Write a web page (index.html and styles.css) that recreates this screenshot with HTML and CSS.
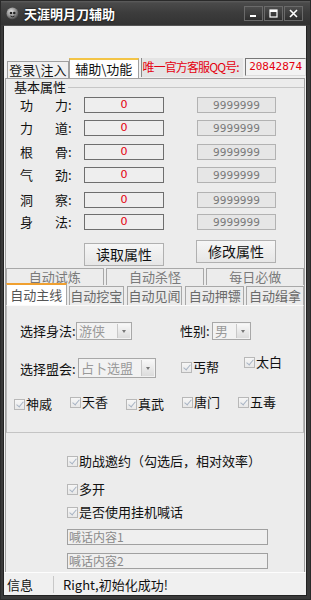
FILE: index.html
```html
<!DOCTYPE html>
<html lang="zh">
<head>
<meta charset="utf-8">
<title>天涯明月刀辅助</title>
<link rel="stylesheet" href="styles.css">
</head>
<body>
<div class="window">
  <div class="titlebar">
    <svg class="app-icon" width="13" height="13" viewBox="0 0 13 13">
      <defs><radialGradient id="g" cx="40%" cy="35%" r="70%"><stop offset="0" stop-color="#e8e8e8"/><stop offset="0.6" stop-color="#8a8a8a"/><stop offset="1" stop-color="#3a3a3a"/></radialGradient></defs>
      <circle cx="6.5" cy="6.5" r="6" fill="url(#g)"/>
      <circle cx="5" cy="6" r="1.3" fill="#222"/><circle cx="8.3" cy="6" r="1.3" fill="#222"/>
      <path d="M4.5 9 Q6.5 10.5 8.5 9" stroke="#222" stroke-width="1" fill="none"/>
    </svg>
    <span class="title">天涯明月刀辅助</span>
    <div class="winbtns">
      <span class="wbtn"><svg width="9" height="9" viewBox="0 0 9 9"><rect x="1" y="6" width="6" height="2" fill="#fff"/></svg></span>
      <span class="wbtn"><svg width="9" height="9" viewBox="0 0 9 9"><rect x="1" y="1" width="7" height="7" fill="none" stroke="#fff" stroke-width="1.2"/><rect x="1" y="1" width="7" height="2" fill="#fff"/></svg></span>
      <span class="wbtn"><svg width="9" height="9" viewBox="0 0 9 9"><path d="M1 1 L8 8 M8 1 L1 8" stroke="#fff" stroke-width="1.6"/></svg></span>
    </div>
  </div>
  <div class="client">
    <div class="tabbar">
      <div class="tab">登录\注入</div>
      <div class="tab tab-active">辅助\功能</div>
      <div class="qq-label">唯一官方客服QQ号:</div>
      <div class="qq-box">20842874</div>
    </div>
    <div class="mainpanel">
      <div class="group-head"><span>基本属性</span><span class="group-line"></span></div>
      <div class="attrs">
        <span class="l1">功</span><span class="l2">力:</span><span class="val">0</span><span></span><span class="max">9999999</span>
        <span class="l1">力</span><span class="l2">道:</span><span class="val">0</span><span></span><span class="max">9999999</span>
        <span class="l1">根</span><span class="l2">骨:</span><span class="val">0</span><span></span><span class="max">9999999</span>
        <span class="l1">气</span><span class="l2">劲:</span><span class="val">0</span><span></span><span class="max">9999999</span>
        <span class="l1">洞</span><span class="l2">察:</span><span class="val">0</span><span></span><span class="max">9999999</span>
        <span class="l1">身</span><span class="l2">法:</span><span class="val">0</span><span></span><span class="max">9999999</span>
      </div>
      <div class="btnrow">
        <div class="btn btn-read">读取属性</div>
        <div class="btn btn-edit">修改属性</div>
      </div>
      <div class="itabs-row1">
        <div class="itab w99">自动试炼</div>
        <div class="itab w100">自动杀怪</div>
        <div class="itab w99">每日必做</div>
      </div>
      <div class="itabs-row2">
        <div class="itab2 itab2-active w62">自动主线</div>
        <div class="itab2 w56">自动挖宝</div>
        <div class="itab2 w57">自动见闻</div>
        <div class="itab2 w60">自动押镖</div>
        <div class="itab2 w59">自动缉拿</div>
      </div>
      <div class="innerpanel">
        <div class="irow irow1">
          <span class="lbl lbl-school">选择身法:</span>
          <div class="combo combo-school"><span class="ctext">游侠</span><span class="carrow"></span></div>
          <span class="lbl lbl-sex">性别:</span>
          <div class="combo combo-sex"><span class="ctext">男</span><span class="carrow"></span></div>
        </div>
        <div class="irow irow2">
          <span class="lbl lbl-school">选择盟会:</span>
          <div class="combo combo-guild"><span class="ctext">占卜选盟</span><span class="carrow"></span></div>
          <label class="chk chk-gai"><span class="box"></span>丐帮</label>
          <label class="chk chk-tai"><span class="box"></span>太白</label>
        </div>
        <div class="irow irow3">
          <label class="chk c56"><span class="box"></span>神威</label>
          <label class="chk c56 up2"><span class="box"></span>天香</label>
          <label class="chk c56"><span class="box"></span>真武</label>
          <label class="chk c56 up2"><span class="box"></span>唐门</label>
          <label class="chk c56 up2"><span class="box"></span>五毒</label>
        </div>
      </div>
      <div class="lower">
        <label class="chk lrow lrow1"><span class="box"></span>助战邀约（勾选后，相对效率）</label>
        <label class="chk lrow lrow2"><span class="box"></span>多开</label>
        <label class="chk lrow lrow3"><span class="box"></span>是否使用挂机喊话</label>
        <div class="tbox tbox1">喊话内容1</div>
        <div class="tbox tbox2">喊话内容2</div>
      </div>
    </div>
    <div class="statusbar">
      <span class="st-info">信息</span>
      <span class="st-sep"></span>
      <span class="st-msg">Right,初始化成功!</span>
    </div>
  </div>
</div>
</body>
</html>
```

FILE: styles.css
```css
* { box-sizing: border-box; }
body { margin: 0; font-family: "Noto Sans CJK SC", "Noto Sans", sans-serif; color: #111; }
.window { width: 311px; height: 600px; background: #3a3a3a; display: flex; flex-direction: column; border: 1px solid #2a2a2a; }
.titlebar { height: 24px; flex: none; display: flex; align-items: center; padding: 0 7px 0 5px;
  background: linear-gradient(#5e5e5e 0, #4a4a4a 2px, #3c3c3c 12px, #333 24px); }
.app-icon { flex: none; }
.title { margin-left: 5px; color: #fff; font-size: 13px; font-weight: bold; letter-spacing: 0; text-shadow: 0 0 2px #000; }
.winbtns { margin-left: auto; display: flex; gap: 1px; }
.wbtn { width: 19px; height: 15px; border: 1px solid #6a6a6a; background: linear-gradient(#4d4d4d, #2e2e2e); display: flex; align-items: center; justify-content: center; }
.client { flex: 1; margin: 0 3px 3px 2px; background: #f0f0f0; display: flex; flex-direction: column; border: 1px solid #222; border-top-color: #555; }

.tabbar { margin-top: 32px; height: 20px; display: flex; align-items: flex-end; padding-left: 3px; flex: none; }
.tab { height: 17px; width: 62px; border: 1px solid #a0a0a0; border-bottom: none; background: #f0f0f0; font-size: 13px; line-height: 15px; text-align: center; }
.tab-active { height: 20px; width: 70px; background: #fff; border-top: 2px solid #f3c446; line-height: 18px; }
.qq-label { align-self: flex-start; margin-left: 2px; width: 103px; height: 19px; background: #e4e4e4; border-left: 1px solid #8a8a8a; color: #e4000f; font-size: 12px; letter-spacing: -0.9px; line-height: 18px; padding-left: 1px; white-space: nowrap; overflow: hidden; }
.qq-box { align-self: flex-start; margin-left: 2px; width: 61px; height: 18px; border: 1px solid; border-color: #777 #ddd #ddd #777; background: #f3f3f3; color: #e4000f; font-family: "DejaVu Sans Mono", monospace; font-size: 11px; line-height: 16px; text-align: center; }

.mainpanel { flex: 1; margin: 0 1px 0 1px; border: 1px solid #a0a0a0; border-bottom: none; background: #ececec; display: flex; flex-direction: column; }
.group-head { display: flex; align-items: center; height: 15px; padding-left: 8px; font-size: 13px; line-height: 15px; }
.group-line { flex: 1; border-top: 1px solid #c6c6c6; margin-left: 2px; margin-top: 2px; }
.attrs { display: grid; grid-template-columns: 35px 29px 80px 33px 79px; grid-template-rows: 23px 24px 23px 25px 22px 16px; padding-left: 14px; margin-top: 3px; font-size: 13px; line-height: 16px; }
.l1, .l2 { white-space: nowrap; }
.val { height: 16px; border: 1px solid #6e6e6e; background: #eeeeee; color: #e4000f; font-size: 11px; text-align: center; line-height: 14px; font-family: "DejaVu Sans", sans-serif; }
.max { height: 16px; border: 1px solid #b2b2b2; background: #e6e6e6; color: #7a7a7a; font-size: 10.5px; text-align: center; line-height: 14px; font-family: "DejaVu Sans", sans-serif; }

.btnrow { display: flex; align-items: flex-start; padding-left: 78px; margin-top: 10px; height: 25px; flex: none; }
.btn { width: 80px; height: 23px; border: 1px solid #b0b0b0; background: linear-gradient(#f6f6f6, #e6e6e6); font-size: 14px; line-height: 21px; text-align: center; }
.btn-read { margin-top: 3px; }
.btn-edit { margin-left: 32px; }

.itabs-row1 { display: flex; gap: 2px; margin-top: 3px; height: 15px; flex: none; }
.itab { height: 17px; border: 1px solid #a8a8a8; border-bottom: none; background: #ececec; color: #7a7a7a; font-size: 13px; line-height: 15px; text-align: center; }
.w99 { width: 99px; } .w100 { width: 100px; }
.itabs-row2 { display: flex; align-items: flex-end; height: 22px; flex: none; position: relative; }
.itab2 { height: 19px; border: 1px solid #a8a8a8; border-bottom: none; background: #ececec; color: #6a6a6a; font-size: 13px; line-height: 17px; text-align: center; margin-right: 2px; white-space: nowrap; }
.itab2-active { height: 22px; background: #fff; border-top: 2px solid #f0a030; color: #555; line-height: 19px; }
.w62 { width: 62px; } .w56 { width: 56px; margin-right: 3px; } .w57 { width: 57px; margin-right: 3px; } .w60 { width: 60px; } .w59 { width: 59px; margin-right: 0; }

.innerpanel { height: 128px; flex: none; border: 1px solid #b8b8b8; border-top: 1px solid #fafafa; border-bottom: 1px solid #c4c4c4; background: #ececec; }
.irow { display: flex; align-items: center; }
.irow1 { margin-top: 16px; height: 18px; }
.irow2 { margin-top: 18px; height: 20px; align-items: flex-start; }
.irow3 { margin-top: 18px; height: 16px; padding-left: 7px; align-items: flex-start; }
.lbl { font-size: 13px; line-height: 18px; white-space: nowrap; }
.lbl-school { margin-left: 13px; width: 56px; }
.irow2 .lbl-school { margin-top: 2px; width: 58px; }
.lbl-sex { margin-left: 48px; width: 32px; }
.combo { display: flex; height: 18px; border: 1px solid #a8a8a8; background: #f2f2f2; }
.irow2 .combo { height: 20px; }
.combo-school { width: 56px; }
.combo-sex { width: 39px; }
.combo-guild { width: 78px; }
.ctext { flex: 1; color: #9a9a9a; font-size: 13px; line-height: 16px; padding-left: 2px; white-space: nowrap; }
.irow2 .ctext { line-height: 18px; }
.carrow { width: 13px; flex: none; border-left: 1px solid #c8c8c8; background: linear-gradient(#f8f8f8, #dcdcdc); position: relative; margin: 1px; }
.carrow::after { content: ""; position: absolute; left: 4px; top: 50%; margin-top: -1px; border-left: 2.5px solid transparent; border-right: 2.5px solid transparent; border-top: 3px solid #777; }

.chk { display: flex; align-items: center; font-size: 13px; line-height: 16px; white-space: nowrap; }
.box { width: 11px; height: 11px; border: 1px solid #b8b8b8; background: linear-gradient(#f6f6f6, #e8e8e8); margin-right: 1px; position: relative; flex: none; }
.box::after { content: ""; position: absolute; left: 3px; top: 0px; width: 3px; height: 6px; border: solid #a8b4c4; border-width: 0 1.5px 1.5px 0; transform: rotate(40deg); }
.chk-gai { margin-left: 25px; margin-top: 1px; }
.chk-tai { margin-left: 25px; margin-top: -4px; }
.c56 { width: 56px; }
.up2 { margin-top: -2px; }

.lower { flex: 1; padding-left: 61px; display: flex; flex-direction: column; }
.lrow1 { margin-top: 20px; }
.lrow2 { margin-top: 12px; }
.lrow3 { margin-top: 7px; }
.tbox { width: 201px; height: 16px; border: 1px solid #a0a0a0; background: #efefef; color: #8a8a8a; font-size: 12px; line-height: 14px; padding-left: 1px; }
.tbox1 { margin-top: 9px; }
.tbox2 { margin-top: 8px; }

.statusbar { height: 23px; flex: none; display: flex; align-items: center; background: #f0f0f0; border-top: 1px solid #fdfdfd; font-size: 13px; }
.st-info { margin-left: 3px; width: 46px; }
.st-sep { width: 1px; height: 17px; background: #c8c8c8; }
.st-msg { margin-left: 9px; font-family: "Noto Sans CJK SC", sans-serif; }
```
